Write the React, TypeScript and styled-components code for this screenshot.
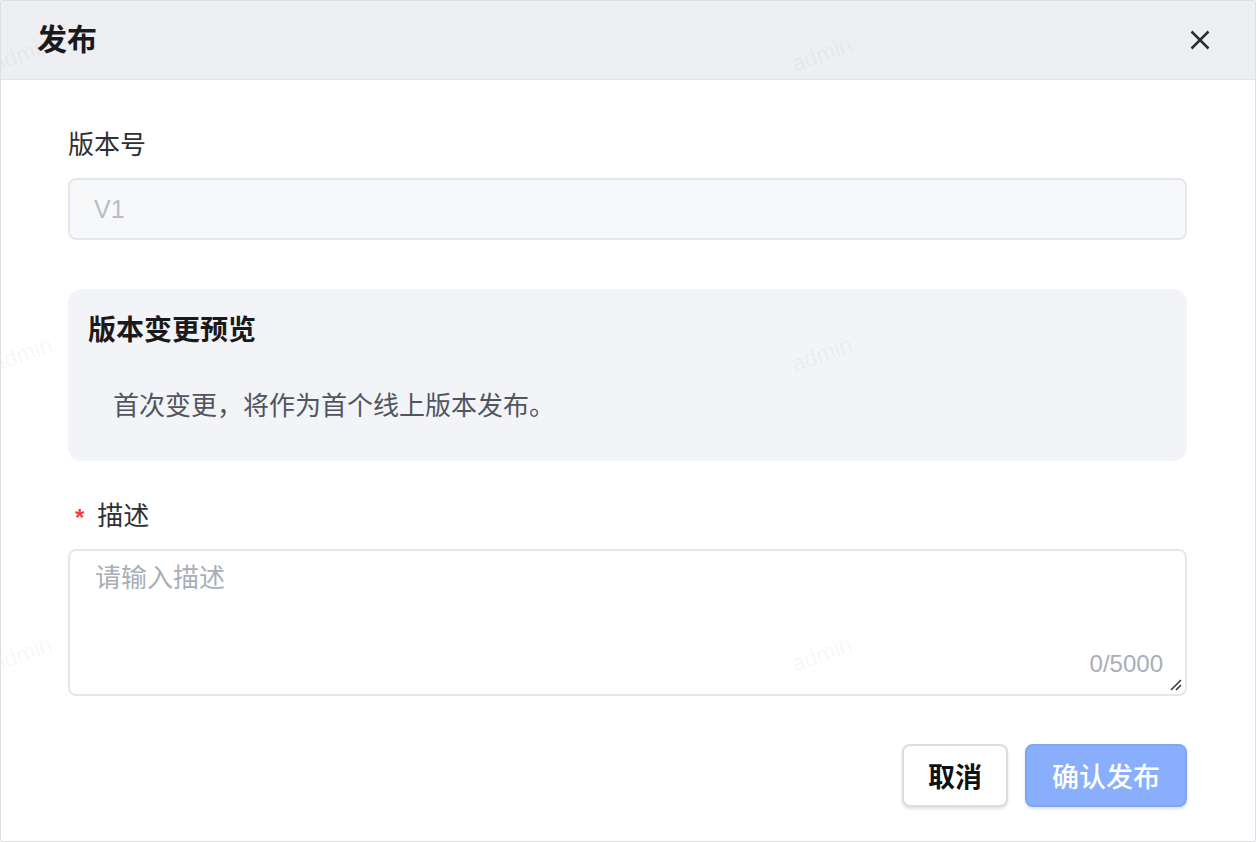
import React from 'react';
import styled, { createGlobalStyle } from 'styled-components';

const GlobalStyle = createGlobalStyle`
  html, body {
    margin: 0;
    padding: 0;
    background: #ffffff;
  }

  body {
    font-family: "Liberation Sans", "Noto Sans CJK SC", sans-serif;
    color: #1d2129;
  }
`;

// watermark spots, the left column is cut by the dialog edge like in the source
const watermarks = [
  { x: -6, y: 71 },
  { x: 794, y: 71 },
  { x: -6, y: 371 },
  { x: 794, y: 371 },
  { x: -6, y: 671 },
  { x: 794, y: 671 },
];

const Dialog = styled.div`
  position: relative;
  box-sizing: border-box;
  width: 1256px;
  height: 842px;
  border: 1px solid #dedfe3;
  border-radius: 2px;
  display: flex;
  flex-direction: column;
  overflow: hidden;
  background: #ffffff;
`;

const Header = styled.div`
  box-sizing: border-box;
  height: 79px;
  flex-shrink: 0;
  display: flex;
  align-items: center;
  justify-content: space-between;
  padding: 0 40px 0 36px;
  background: #eeeff3;
  border-bottom: 1px solid #e2e3e8;
`;

const Title = styled.h1`
  margin: 0;
  font-size: 30px;
  font-weight: 600;
  line-height: 36px;
  color: #1a1a1a;
`;

const CloseButton = styled.button`
  width: 30px;
  height: 30px;
  padding: 0;
  border: none;
  background: transparent;
  display: flex;
  align-items: center;
  justify-content: center;
  color: #2b2d33;
  cursor: pointer;
`;

const Body = styled.div`
  flex: 1;
  display: flex;
  flex-direction: column;
  padding: 47px 68px 0 67px;
`;

const Label = styled.label<{ $gap?: number }>`
  display: flex;
  align-items: center;
  gap: 13px;
  margin-top: ${(p) => p.$gap ?? 0}px;
  font-size: 26px;
  line-height: 36px;
  color: #2e3033;
`;

const Required = styled.span`
  color: #f53f3f;
  font-size: 24px;
  font-weight: 700;
  padding-left: 7px;
  line-height: 36px;
  transform: translateY(2px);
`;

const VersionInput = styled.div`
  box-sizing: border-box;
  height: 62px;
  margin-top: 15px;
  padding: 0 24px;
  display: flex;
  align-items: center;
  background: #f7f8fa;
  border: 2px solid #e6e7eb;
  border-radius: 8px;
  font-size: 25px;
  color: #b9bdc6;
`;

const Preview = styled.section`
  box-sizing: border-box;
  height: 172px;
  margin-top: 49px;
  padding: 24px 20px 0 20px;
  background: #f3f4f8;
  border-radius: 14px;
`;

const PreviewTitle = styled.h2`
  margin: 0;
  font-size: 28px;
  font-weight: 600;
  line-height: 36px;
  color: #1a1a1a;
`;

const PreviewText = styled.p`
  margin: 39px 0 0 25px;
  font-size: 26px;
  line-height: 36px;
  color: #50555e;
`;

const TextAreaBox = styled.div`
  position: relative;
  box-sizing: border-box;
  height: 147px;
  margin-top: 15px;
  border: 2px solid #e6e7eb;
  border-radius: 8px;
  background: #ffffff;
`;

const TextArea = styled.textarea`
  box-sizing: border-box;
  width: 100%;
  height: 100%;
  padding: 9px 24px 0 25px;
  border: none;
  outline: none;
  resize: none;
  background: transparent;
  font-family: "Liberation Sans", "Noto Sans CJK SC", sans-serif;
  font-size: 26px;
  line-height: 36px;
  color: #1d2129;

  &::placeholder {
    color: #a9aeb8;
  }
`;

const Counter = styled.span`
  position: absolute;
  right: 22px;
  bottom: 15px;
  font-size: 24px;
  line-height: 30px;
  color: #a9aeb8;
`;

const Grip = styled.svg`
  position: absolute;
  right: 2px;
  bottom: 2px;
`;

const Footer = styled.div`
  display: flex;
  justify-content: flex-end;
  gap: 17px;
  margin-top: 48px;
`;

const Button = styled.button<{ $primary?: boolean }>`
  box-sizing: border-box;
  height: 63px;
  padding: 0 ${(p) => (p.$primary ? 25 : 24)}px;
  border-radius: 8px;
  border: 2px solid ${(p) => (p.$primary ? '#7fa5f5' : '#dcdcdc')};
  background: ${(p) => (p.$primary ? '#88aefc' : '#ffffff')};
  color: ${(p) => (p.$primary ? '#ffffff' : '#111111')};
  box-shadow: 0 2px 3px rgba(0, 0, 0, 0.12);
  font-family: "Liberation Sans", "Noto Sans CJK SC", sans-serif;
  font-size: 27px;
  font-weight: ${(p) => (p.$primary ? 500 : 700)};
  cursor: pointer;
`;

const Watermark = styled.svg`
  position: absolute;
  inset: 0;
  pointer-events: none;
`;

export default function App() {
  return (
    <>
      <GlobalStyle />
      <Dialog>
        <Header>
          <Title>发布</Title>
          <CloseButton aria-label="关闭">
            <svg width="20" height="20" viewBox="0 0 20 20">
              <path d="M1.5 1.5 L18.5 18.5 M18.5 1.5 L1.5 18.5" stroke="currentColor" strokeWidth="2.5" />
            </svg>
          </CloseButton>
        </Header>
        <Body>
          <Label>版本号</Label>
          <VersionInput>V1</VersionInput>

          <Preview>
            <PreviewTitle>版本变更预览</PreviewTitle>
            <PreviewText>首次变更，将作为首个线上版本发布。</PreviewText>
          </Preview>

          <Label $gap={37}>
            <Required>*</Required>
            描述
          </Label>
          <TextAreaBox>
            <TextArea placeholder="请输入描述" />
            <Counter>0/5000</Counter>
            <Grip width="14" height="14" viewBox="0 0 14 14">
              <path d="M2 12 L12 2 M7 12 L12 7" stroke="#3a3a3a" strokeWidth="1.6" />
            </Grip>
          </TextAreaBox>

          <Footer>
            <Button>取消</Button>
            <Button $primary>确认发布</Button>
          </Footer>
        </Body>
        <Watermark width="1256" height="842">
          {watermarks.map((w, i) => (
            <text
              key={i}
              x={w.x}
              y={w.y}
              transform={`rotate(-20 ${w.x} ${w.y})`}
              fontFamily="Liberation Sans, sans-serif"
              fontSize="23"
              fill="rgba(0, 0, 0, 0.055)"
            >
              admin
            </text>
          ))}
        </Watermark>
      </Dialog>
    </>
  );
}
